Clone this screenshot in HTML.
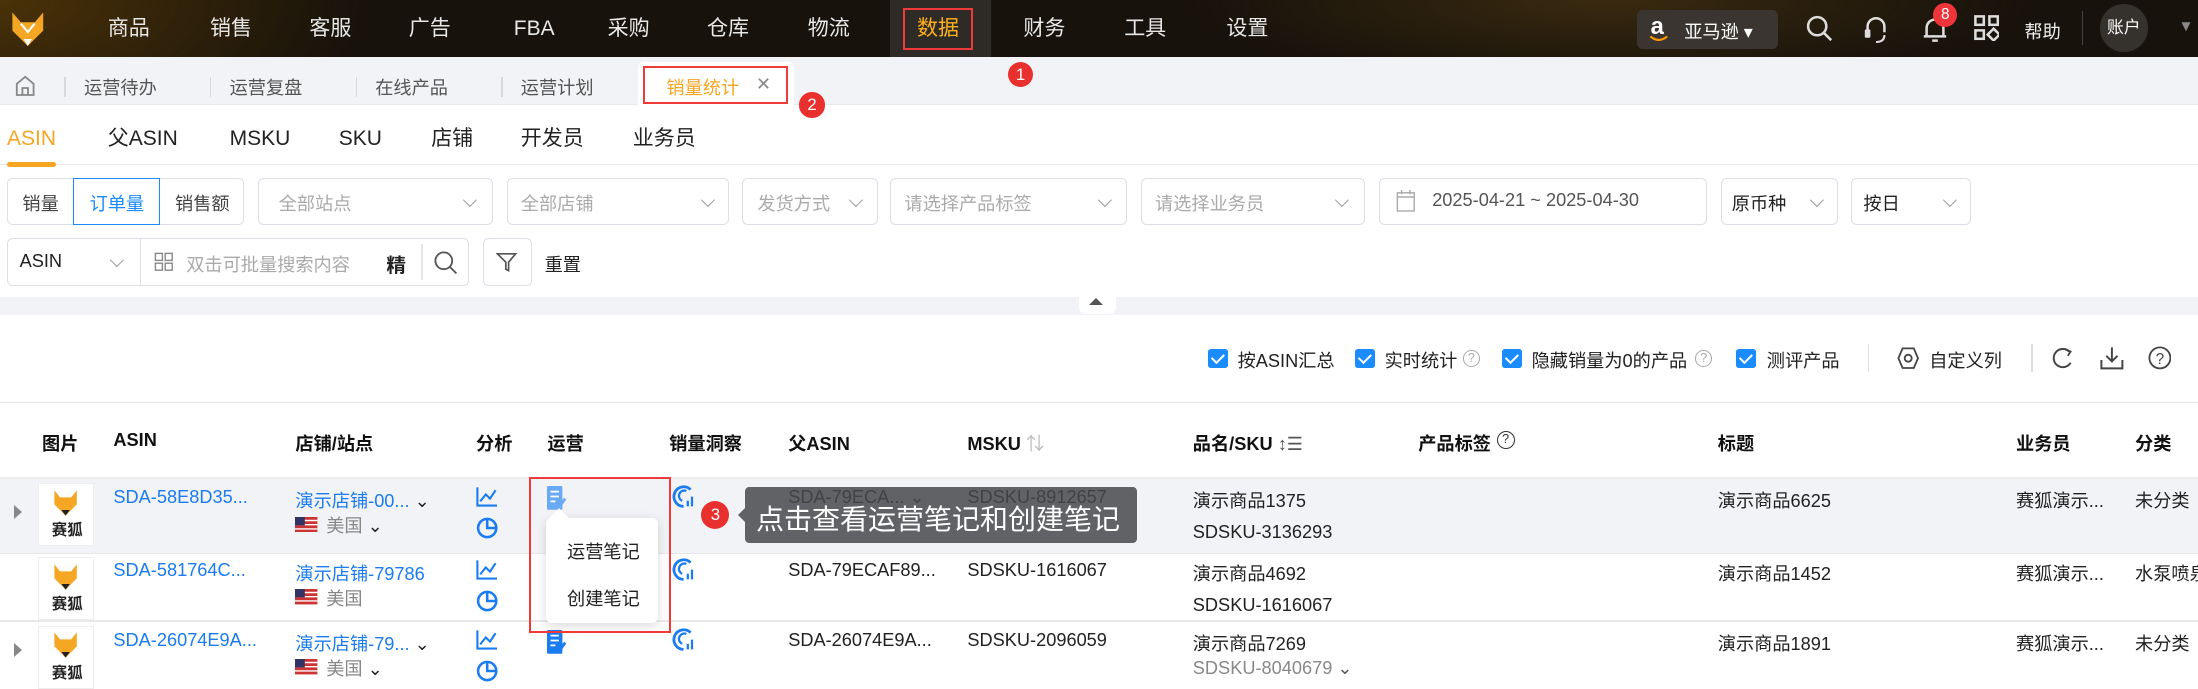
<!DOCTYPE html>
<html><head><meta charset="utf-8">
<style>
*{box-sizing:border-box;margin:0;padding:0}
html,body{width:2198px;height:689px;overflow:hidden;background:#fff}
#w{zoom:1.4;width:1570px;height:493px;position:relative;font-family:"Liberation Sans","Noto Sans CJK SC",sans-serif;font-size:13px;color:#222;overflow:hidden}
.a{position:absolute;white-space:nowrap}
.top{left:0;top:0;width:1570px;height:41px;background:radial-gradient(ellipse 260px 120px at 0px 0px,#4a3208,transparent),radial-gradient(ellipse 300px 60px at 1150px 0px,#3a2a10,transparent),#17120b}
.nav{color:#e8e8e8;font-size:15px;top:11px;line-height:20px;height:20px}
.tabbar{left:0;top:41px;width:1570px;height:34px;background:#f2f3f6;border-bottom:1px solid #e6e8ec}
.tb{top:53px;color:#555;font-size:13px}
.sep{width:1px;height:14px;background:#d8d8d8;top:55px}
.st{top:89px;font-size:15px;color:#222;line-height:20px}
.box{border:1px solid #dcdfe6;border-radius:4px;background:#fff;height:34px}
.ph{color:#aaa}
.chev{width:7px;height:7px;border-right:1px solid #999;border-bottom:1px solid #999;transform:rotate(45deg)}
.cb{width:14px;height:14px;background:#1a8cff;border-radius:2px;top:249px}
.cb:after{content:"";position:absolute;left:4px;top:2px;width:4px;height:7px;border-right:1.5px solid #fff;border-bottom:1.5px solid #fff;transform:rotate(45deg)}
.th{top:307px;font-weight:bold;color:#111}
.lk{color:#1a7cf0}
.gr{color:#888}
.rc{width:18px;height:18px;border-radius:50%;background:#e8302f;color:#fff;font-size:12px;text-align:center;line-height:18px}
.img{width:40px;height:45px;border:1px solid #eee;background:#fff}
.q{width:12px;height:12px;border:1px solid #aaa;border-radius:50%;font-size:9px;color:#aaa;text-align:center;line-height:10px}
</style></head><body><div id="w">
<div class="a top"></div>
<svg class="a" style="left:8px;top:8px" width="24" height="26" viewBox="0 0 24 26"><path d="M1 1 L7 8 L17 8 L23 1 L23 14 L12 25 L1 14 Z" fill="#f5a623"/><path d="M7 9 L12 15 L17 9" fill="none" stroke="#fff" stroke-width="1.5"/><path d="M9 20 L15 20 L12 25Z" fill="#fff"/></svg>
<div class="a nav" style="left:77px">商品</div><div class="a nav" style="left:150px">销售</div><div class="a nav" style="left:221px">客服</div><div class="a nav" style="left:292px">广告</div><div class="a nav" style="left:367px">FBA</div><div class="a nav" style="left:434px">采购</div><div class="a nav" style="left:505px">仓库</div><div class="a nav" style="left:577px">物流</div>
<div class="a" style="left:636px;top:0;width:72px;height:41px;background:#2e2a25"></div>
<div class="a" style="left:645px;top:6px;width:50px;height:30px;border:2px solid #f03a3a"></div>
<div class="a nav" style="left:655px;color:#ffb020">数据</div>
<div class="a nav" style="left:731px">财务</div><div class="a nav" style="left:803px">工具</div><div class="a nav" style="left:876px">设置</div>
<div class="a" style="left:1169px;top:7px;width:101px;height:28px;background:#3a3530;border-radius:4px"></div>
<div class="a" style="left:1179px;top:9px;color:#fff;font-size:17px;font-weight:bold">a</div>
<svg class="a" style="left:1178px;top:25px" width="14" height="6"><path d="M1 1 Q7 6 13 1" fill="none" stroke="#f90" stroke-width="1.5"/></svg>
<div class="a" style="left:1203px;top:13px;color:#fff;font-size:13px">亚马逊 ▾</div>
<svg class="a" style="left:1290px;top:11px" width="20" height="20"><circle cx="8" cy="8" r="6.5" fill="none" stroke="#ddd" stroke-width="1.8"/><path d="M13 13 L18 18" stroke="#ddd" stroke-width="1.8"/></svg>
<svg class="a" style="left:1330px;top:10px" width="20" height="22"><path d="M4 13 V9 A6 6 0 0 1 16 9 V13" fill="none" stroke="#ddd" stroke-width="1.8"/><rect x="2" y="11" width="4" height="6" rx="1" fill="#ddd"/><path d="M10 20 Q16 20 16 15" fill="none" stroke="#ddd" stroke-width="1.5"/></svg>
<svg class="a" style="left:1372px;top:10px" width="20" height="22"><path d="M4 16 V10 A6 6 0 0 1 16 10 V16 Z M2 16 H18" fill="none" stroke="#ddd" stroke-width="1.8"/><path d="M8 19 H12" stroke="#ddd" stroke-width="1.8"/></svg>
<div class="a rc" style="left:1381px;top:2px;width:17px;height:17px;font-size:11px;line-height:17px;background:#f0353a">8</div>
<svg class="a" style="left:1410px;top:11px" width="18" height="18"><g fill="none" stroke="#ddd" stroke-width="1.8"><rect x="1" y="1" width="6" height="6"/><rect x="11" y="1" width="6" height="6"/><rect x="1" y="11" width="6" height="6"/><rect x="11" y="11" width="6" height="6" transform="rotate(45 14 14)"/></g></svg>
<div class="a" style="left:1446px;top:13px;color:#eee;font-size:13px">帮助</div>
<div class="a" style="left:1487px;top:8px;width:1px;height:24px;background:#444"></div>
<div class="a" style="left:1500px;top:3px;width:34px;height:34px;border-radius:50%;background:#35312d;color:#fff;font-size:12px;text-align:center;line-height:34px">账户</div>
<div class="a" style="left:1556px;top:13px;color:#888;font-size:11px">▼</div>

<div class="a tabbar"></div>
<svg class="a" style="left:10px;top:53px" width="16" height="16"><path d="M2 7 L8 2 L14 7 V15 H2 Z M6 15 V10 H10 V15" fill="none" stroke="#888" stroke-width="1.3"/></svg>
<div class="a sep" style="left:46px"></div><div class="a tb" style="left:60px">运营待办</div>
<div class="a sep" style="left:150px"></div><div class="a tb" style="left:164px">运营复盘</div>
<div class="a sep" style="left:254px"></div><div class="a tb" style="left:268px">在线产品</div>
<div class="a sep" style="left:358px"></div><div class="a tb" style="left:372px">运营计划</div>
<div class="a" style="left:456px;top:44px;width:111px;height:31px;background:#fff;border-radius:4px 4px 0 0"></div>
<div class="a" style="left:459px;top:47px;width:104px;height:27px;border:2px solid #f03a3a"></div>
<div class="a tb" style="left:476px;color:#f5a623">销量统计</div>
<div class="a tb" style="left:540px;color:#888">✕</div>
<div class="a rc" style="left:720px;top:44px">1</div>
<div class="a rc" style="left:571px;top:66px">2</div>

<div class="a st" style="left:5px;color:#f5a623">ASIN</div><div class="a st" style="left:77px">父ASIN</div><div class="a st" style="left:164px">MSKU</div><div class="a st" style="left:242px">SKU</div><div class="a st" style="left:308px">店铺</div><div class="a st" style="left:372px">开发员</div><div class="a st" style="left:452px">业务员</div>
<div class="a" style="left:0;top:117px;width:1570px;height:1px;background:#e8e8e8"></div>
<div class="a" style="left:5px;top:116px;width:35px;height:3px;background:#f5a623;border-radius:2px"></div>

<div class="a box" style="left:5px;top:127px;width:169px"></div>
<div class="a" style="left:52px;top:127px;width:62px;height:34px;border:1px solid #1a8cff"></div>
<div class="a" style="left:16px;top:136px;color:#444">销量</div><div class="a" style="left:64px;top:136px;color:#1a8cff">订单量</div><div class="a" style="left:125px;top:136px;color:#444">销售额</div>
<div class="a box" style="left:184px;top:127px;width:168px"></div><div class="a ph" style="left:199px;top:136px">全部站点</div><div class="a chev" style="left:332px;top:139px"></div>
<div class="a box" style="left:362px;top:127px;width:159px"></div><div class="a ph" style="left:372px;top:136px">全部店铺</div><div class="a chev" style="left:502px;top:139px"></div>
<div class="a box" style="left:530px;top:127px;width:97px"></div><div class="a ph" style="left:541px;top:136px">发货方式</div><div class="a chev" style="left:608px;top:139px"></div>
<div class="a box" style="left:636px;top:127px;width:169px"></div><div class="a ph" style="left:646px;top:136px">请选择产品标签</div><div class="a chev" style="left:786px;top:139px"></div>
<div class="a box" style="left:815px;top:127px;width:160px"></div><div class="a ph" style="left:825px;top:136px">请选择业务员</div><div class="a chev" style="left:955px;top:139px"></div>
<div class="a box" style="left:985px;top:127px;width:234px"></div>
<svg class="a" style="left:997px;top:136px" width="14" height="16"><rect x="1" y="2" width="12" height="13" fill="none" stroke="#aaa"/><path d="M1 5 H13 M4 0 V3 M10 0 V3" stroke="#aaa"/></svg>
<div class="a" style="left:1023px;top:136px;color:#555">2025-04-21 ~ 2025-04-30</div>
<div class="a box" style="left:1229px;top:127px;width:84px"></div><div class="a" style="left:1237px;top:136px">原币种</div><div class="a chev" style="left:1294px;top:139px"></div>
<div class="a box" style="left:1322px;top:127px;width:86px"></div><div class="a" style="left:1331px;top:136px">按日</div><div class="a chev" style="left:1389px;top:139px"></div>

<div class="a box" style="left:5px;top:170px;width:330px;height:34px"></div>
<div class="a" style="left:100px;top:170px;width:1px;height:34px;background:#dcdfe6"></div>
<div class="a" style="left:14px;top:179px">ASIN</div><div class="a chev" style="left:80px;top:182px"></div>
<svg class="a" style="left:110px;top:180px" width="14" height="14"><g fill="none" stroke="#888"><rect x="1" y="1" width="5" height="5"/><rect x="8" y="1" width="5" height="5"/><rect x="1" y="8" width="5" height="5"/><rect x="8" y="8" width="5" height="5"/></g></svg>
<div class="a ph" style="left:133px;top:179px">双击可批量搜索内容</div>
<div class="a" style="left:276px;top:178px;font-weight:bold;font-size:14px">精</div>
<div class="a" style="left:301px;top:174px;width:1px;height:26px;background:#e5e5e5"></div>
<svg class="a" style="left:310px;top:179px" width="17" height="17"><circle cx="7" cy="7" r="6" fill="none" stroke="#555" stroke-width="1.3"/><path d="M11.5 11.5 L16 16" stroke="#555" stroke-width="1.3"/></svg>
<div class="a box" style="left:345px;top:170px;width:35px;height:34px"></div>
<svg class="a" style="left:354px;top:179px" width="16" height="16"><path d="M1 2 H14 L9 8 V14 L7 13 V8 Z" fill="none" stroke="#555" stroke-width="1.2"/></svg>
<div class="a" style="left:389px;top:179px">重置</div>

<div class="a" style="left:0;top:212px;width:1570px;height:13px;background:#f2f3f6"></div>
<div class="a" style="left:771px;top:212px;width:26px;height:12px;background:#fff;border-radius:0 0 5px 5px"></div>
<div class="a" style="left:778px;top:213px;width:0;height:0;border-left:5px solid transparent;border-right:5px solid transparent;border-bottom:5px solid #555"></div>

<div class="a cb" style="left:863px"></div><div class="a" style="left:884px;top:248px">按ASIN汇总</div>
<div class="a cb" style="left:968px"></div><div class="a" style="left:989px;top:248px">实时统计</div><div class="a q" style="left:1045px;top:250px">?</div>
<div class="a cb" style="left:1073px"></div><div class="a" style="left:1094px;top:248px">隐藏销量为0的产品</div><div class="a q" style="left:1211px;top:250px">?</div>
<div class="a cb" style="left:1240px"></div><div class="a" style="left:1262px;top:248px">测评产品</div>
<div class="a" style="left:1334px;top:246px;width:1px;height:20px;background:#ddd"></div>
<svg class="a" style="left:1355px;top:248px" width="16" height="16"><path d="M4 1 H12 L15 8 L12 15 H4 L1 8 Z" fill="none" stroke="#444" stroke-width="1.3"/><circle cx="8" cy="8" r="2.5" fill="none" stroke="#444" stroke-width="1.3"/></svg>
<div class="a" style="left:1378px;top:248px">自定义列</div>
<div class="a" style="left:1451px;top:246px;width:1px;height:20px;background:#ddd"></div>
<svg class="a" style="left:1465px;top:247px" width="16" height="18"><path d="M13 4 A6.5 6.5 0 1 0 14 12" fill="none" stroke="#444" stroke-width="1.4"/><path d="M10 2 L14 4 L12 7" fill="none" stroke="#444" stroke-width="1.3"/></svg>
<svg class="a" style="left:1500px;top:247px" width="17" height="17"><path d="M8.5 1 V11 M4.5 7 L8.5 11 L12.5 7 M1 10 V16 H16 V10" fill="none" stroke="#444" stroke-width="1.4"/></svg>
<svg class="a" style="left:1534px;top:247px" width="17" height="17"><circle cx="8.5" cy="8.5" r="7.5" fill="none" stroke="#444" stroke-width="1.3"/><text x="8.5" y="13" font-size="11" text-anchor="middle" fill="#444" font-family="Liberation Sans">?</text></svg>

<div class="a" style="left:0;top:287px;width:1570px;height:1px;background:#e5e5e5"></div>
<div class="a th" style="left:30px">图片</div><div class="a th" style="left:81px">ASIN</div><div class="a th" style="left:211px">店铺/站点</div><div class="a th" style="left:340px">分析</div><div class="a th" style="left:391px">运营</div><div class="a th" style="left:478px">销量洞察</div><div class="a th" style="left:563px">父ASIN</div><div class="a th" style="left:691px">MSKU <span style="color:#bbb;font-weight:normal">⇅</span></div><div class="a th" style="left:852px">品名/SKU <span style="color:#555;font-weight:normal">↕☰</span></div><div class="a th" style="left:1013px">产品标签</div><div class="a q" style="left:1069px;top:308px;border-color:#333;color:#333;width:13px;height:13px">?</div><div class="a th" style="left:1227px">标题</div><div class="a th" style="left:1440px">业务员</div><div class="a th" style="left:1525px">分类</div>
<div class="a" style="left:0;top:341px;width:1570px;height:1px;background:#eee"></div>

<div class="a" style="left:0;top:342px;width:1570px;height:53px;background:#f2f3f6"></div>
<div class="a" style="left:0;top:395px;width:1570px;height:1px;background:#e8e8e8"></div>
<div class="a" style="left:0;top:443px;width:1570px;height:1px;background:#e8e8e8"></div>

<div class="a" style="left:10px;top:361px;border-left:6px solid #888;border-top:5px solid transparent;border-bottom:5px solid transparent"></div>
<div class="a" style="left:10px;top:459px;border-left:6px solid #888;border-top:5px solid transparent;border-bottom:5px solid transparent"></div>
<div class="a img" style="left:27px;top:345px"></div><div class="a img" style="left:27px;top:398px"></div><div class="a img" style="left:27px;top:447px"></div>
<svg class="a" style="left:38px;top:349px" width="18" height="20"><path d="M1 1 L5 6 L13 6 L17 1 V11 L9 19 L1 11Z" fill="#f5a623"/><path d="M6 15 H12 L9 19Z" fill="#222"/></svg>
<svg class="a" style="left:38px;top:402px" width="18" height="20"><path d="M1 1 L5 6 L13 6 L17 1 V11 L9 19 L1 11Z" fill="#f5a623"/><path d="M6 15 H12 L9 19Z" fill="#222"/></svg>
<svg class="a" style="left:38px;top:451px" width="18" height="20"><path d="M1 1 L5 6 L13 6 L17 1 V11 L9 19 L1 11Z" fill="#f5a623"/><path d="M6 15 H12 L9 19Z" fill="#222"/></svg>
<div class="a" style="left:37px;top:370px;font-size:11px;font-weight:bold">赛狐</div><div class="a" style="left:37px;top:423px;font-size:11px;font-weight:bold">赛狐</div><div class="a" style="left:37px;top:472px;font-size:11px;font-weight:bold">赛狐</div>

<div class="a lk" style="left:81px;top:348px">SDA-58E8D35...</div>
<div class="a lk" style="left:81px;top:400px">SDA-581764C...</div>
<div class="a lk" style="left:81px;top:450px">SDA-26074E9A...</div>
<div class="a lk" style="left:211px;top:348px">演示店铺-00... <span style="color:#222">⌄</span></div>
<div class="a lk" style="left:211px;top:400px">演示店铺-79786</div>
<div class="a lk" style="left:211px;top:450px">演示店铺-79... <span style="color:#222">⌄</span></div>
<svg class="a" style="left:211px;top:369px" width="16" height="11"><rect width="16" height="11" fill="#c33"/><path d="M0 2.5H16M0 5.5H16M0 8.5H16" stroke="#fff" stroke-width="1"/><rect width="7" height="6" fill="#336"/></svg><div class="a gr" style="left:233px;top:366px">美国 <span style="color:#222">⌄</span></div>
<svg class="a" style="left:211px;top:421px" width="16" height="11"><rect width="16" height="11" fill="#c33"/><path d="M0 2.5H16M0 5.5H16M0 8.5H16" stroke="#fff" stroke-width="1"/><rect width="7" height="6" fill="#336"/></svg><div class="a gr" style="left:233px;top:418px">美国</div>
<svg class="a" style="left:211px;top:471px" width="16" height="11"><rect width="16" height="11" fill="#c33"/><path d="M0 2.5H16M0 5.5H16M0 8.5H16" stroke="#fff" stroke-width="1"/><rect width="7" height="6" fill="#336"/></svg><div class="a gr" style="left:233px;top:468px">美国 <span style="color:#222">⌄</span></div>

<svg class="a" style="left:340px;top:347px" width="16" height="40"><path d="M1 1V14H15 M3 11L7 6L10 9L14 3" fill="none" stroke="#1a7cf0" stroke-width="1.5"/><circle cx="8" cy="30" r="6.5" fill="none" stroke="#1a7cf0" stroke-width="1.8"/><path d="M8 23.5V30H14.5" fill="none" stroke="#1a7cf0" stroke-width="1.8"/></svg>
<svg class="a" style="left:340px;top:399px" width="16" height="40"><path d="M1 1V14H15 M3 11L7 6L10 9L14 3" fill="none" stroke="#1a7cf0" stroke-width="1.5"/><circle cx="8" cy="30" r="6.5" fill="none" stroke="#1a7cf0" stroke-width="1.8"/><path d="M8 23.5V30H14.5" fill="none" stroke="#1a7cf0" stroke-width="1.8"/></svg>
<svg class="a" style="left:340px;top:449px" width="16" height="40"><path d="M1 1V14H15 M3 11L7 6L10 9L14 3" fill="none" stroke="#1a7cf0" stroke-width="1.5"/><circle cx="8" cy="30" r="6.5" fill="none" stroke="#1a7cf0" stroke-width="1.8"/><path d="M8 23.5V30H14.5" fill="none" stroke="#1a7cf0" stroke-width="1.8"/></svg>
<svg class="a" style="left:479px;top:346px" width="18" height="20"><path d="M14 4 A7 7 0 1 0 9 16" fill="none" stroke="#1a7cf0" stroke-width="2"/><path d="M11 5 A3.5 3.5 0 1 0 8 12" fill="none" stroke="#1a7cf0" stroke-width="1.6"/><path d="M12 16V12M15 16V9" stroke="#1a7cf0" stroke-width="1.6"/></svg>
<svg class="a" style="left:479px;top:398px" width="18" height="20"><path d="M14 4 A7 7 0 1 0 9 16" fill="none" stroke="#1a7cf0" stroke-width="2"/><path d="M11 5 A3.5 3.5 0 1 0 8 12" fill="none" stroke="#1a7cf0" stroke-width="1.6"/><path d="M12 16V12M15 16V9" stroke="#1a7cf0" stroke-width="1.6"/></svg>
<svg class="a" style="left:479px;top:448px" width="18" height="20"><path d="M14 4 A7 7 0 1 0 9 16" fill="none" stroke="#1a7cf0" stroke-width="2"/><path d="M11 5 A3.5 3.5 0 1 0 8 12" fill="none" stroke="#1a7cf0" stroke-width="1.6"/><path d="M12 16V12M15 16V9" stroke="#1a7cf0" stroke-width="1.6"/></svg>
<svg class="a" style="left:391px;top:347px" width="14" height="17"><rect width="11" height="17" rx="1" fill="#6aaaf5"/><path d="M2.5 4H8.5M2.5 7.5H8.5M2.5 11H6" stroke="#fff" stroke-width="1.3"/><path d="M8 16L13 9" stroke="#6aaaf5" stroke-width="2"/></svg>
<svg class="a" style="left:391px;top:450px" width="14" height="17"><rect width="11" height="17" rx="1" fill="#1a7cf0"/><path d="M2.5 4H8.5M2.5 7.5H8.5M2.5 11H6" stroke="#fff" stroke-width="1.3"/><path d="M8 16L13 9" stroke="#1a7cf0" stroke-width="2"/></svg>

<div class="a" style="left:563px;top:348px">SDA-79ECA... ⌄</div><div class="a" style="left:691px;top:348px">SDSKU-8912657</div>
<div class="a" style="left:563px;top:400px">SDA-79ECAF89...</div><div class="a" style="left:691px;top:400px">SDSKU-1616067</div>
<div class="a" style="left:563px;top:450px">SDA-26074E9A...</div><div class="a" style="left:691px;top:450px">SDSKU-2096059</div>
<div class="a" style="left:852px;top:348px">演示商品1375</div><div class="a" style="left:852px;top:373px">SDSKU-3136293</div>
<div class="a" style="left:852px;top:400px">演示商品4692</div><div class="a" style="left:852px;top:425px">SDSKU-1616067</div>
<div class="a" style="left:852px;top:450px">演示商品7269</div><div class="a gr" style="left:852px;top:470px">SDSKU-8040679 <span style="color:#555">⌄</span></div>
<div class="a" style="left:1227px;top:348px">演示商品6625</div><div class="a" style="left:1227px;top:400px">演示商品1452</div><div class="a" style="left:1227px;top:450px">演示商品1891</div>
<div class="a" style="left:1440px;top:348px">赛狐演示...</div><div class="a" style="left:1440px;top:400px">赛狐演示...</div><div class="a" style="left:1440px;top:450px">赛狐演示...</div>
<div class="a" style="left:1525px;top:348px">未分类</div><div class="a" style="left:1525px;top:400px">水泵喷泉</div><div class="a" style="left:1525px;top:450px">未分类</div>

<div class="a" style="left:390px;top:370px;width:80px;height:75px;background:#fff;border-radius:4px;box-shadow:0 2px 8px rgba(0,0,0,.15)"></div>
<div class="a" style="left:394px;top:365px;width:10px;height:10px;background:#fff;transform:rotate(45deg)"></div>
<div class="a" style="left:405px;top:384px">运营笔记</div>
<div class="a" style="left:405px;top:418px">创建笔记</div>
<div class="a" style="left:378px;top:341px;width:101px;height:111px;border:2px solid #f03a3a"></div>

<div class="a" style="left:532px;top:348px;width:280px;height:40px;background:rgba(70,72,76,.85);border-radius:3px"></div>
<div class="a" style="left:527px;top:363px;width:0;height:0;border-top:5px solid transparent;border-bottom:5px solid transparent;border-right:5px solid rgba(70,72,76,.85)"></div>
<div class="a" style="left:540px;top:356px;color:#fff;font-size:20px">点击查看运营笔记和创建笔记</div>
<div class="a rc" style="left:501px;top:358px;width:20px;height:20px;line-height:20px">3</div>
</div></body></html>
